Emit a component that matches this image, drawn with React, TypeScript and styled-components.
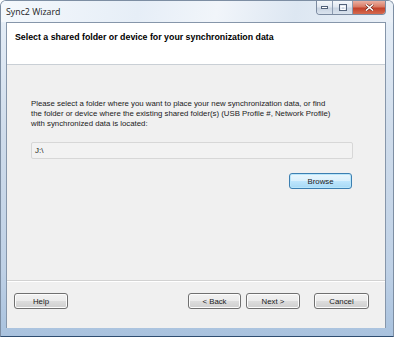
import React from 'react';
import styled, { createGlobalStyle, css } from 'styled-components';

const Global = createGlobalStyle`
  html, body { margin: 0; padding: 0; background: #ffffff; }
  body { font-family: "Liberation Sans", Arial, sans-serif; }
  #root { width: 394px; height: 337px; }
`;

const Window = styled.div`
  width: 394px;
  height: 337px;
  box-sizing: border-box;
  display: flex;
  flex-direction: column;
  border: 1px solid #7d8ea3;
  border-bottom-color: #2f4d70;
  border-radius: 6px 6px 0 0;
  overflow: hidden;
  background: linear-gradient(180deg, #f3f7fb 0%, #e3ecf6 8%, #cfdceb 40%, #bfd1e6 80%, #a9c2de 100%);
`;

const TitleBar = styled.div`
  height: 21px;
  flex: none;
  display: flex;
  align-items: flex-start;
  justify-content: space-between;
  padding: 0 7px 0 5px;
  background: linear-gradient(100deg, #f4f8fc 0%, #e6eef7 35%, #f1f5fa 55%, #dde7f2 75%, #eaf0f7 100%);
`;

const Title = styled.div`
  font-family: "Open Sans", "Liberation Sans", sans-serif;
  font-size: 8.8px;
  color: #1b1b1b;
  line-height: 1;
  padding-top: 7px;
`;

const Caption = styled.div`
  display: flex;
  height: 13px;
  border: 1px solid #7b8aa0;
  border-top: none;
  border-radius: 0 0 4px 4px;
  overflow: hidden;
`;

const CapBtn = styled.div<{ $w: number; $close?: boolean }>`
  width: ${p => p.$w}px;
  height: 100%;
  display: flex;
  align-items: center;
  justify-content: center;
  box-sizing: border-box;
  ${p => p.$close
    ? css`
      background: linear-gradient(180deg, #eab0a2 0%, #d97a64 45%, #c2412a 55%, #d56a4f 100%);
    `
    : css`
      background: linear-gradient(180deg, #f4f7fb 0%, #e1e8f1 45%, #c9d4e2 55%, #dae3ee 100%);
      border-right: 1px solid #8c9bb0;
    `}
`;

const ClientWrap = styled.div`
  flex: 1;
  display: flex;
  padding: 0 7px 0 5px;
`;

const Client = styled.div`
  flex: 1;
  display: flex;
  flex-direction: column;
  border: 1px solid #8696aa;
  border-bottom: none;
  background: #f0f0f0;
`;

const Header = styled.div`
  height: 41px;
  flex: none;
  background: #ffffff;
  border-bottom: 1px solid #c9cfd5;
  box-sizing: content-box;
  display: flex;
  align-items: flex-start;
  padding-left: 8px;
`;

const Heading = styled.div`
  font-weight: bold;
  font-size: 8.8px;
  color: #000;
  padding-top: 9px;
  line-height: 10px;
`;

const Body = styled.div`
  flex: 1;
  display: flex;
  flex-direction: column;
  padding: 34px 32px 0 24px;
`;

const Para = styled.p`
  margin: 0;
  font-size: 7.8px;
  line-height: 10px;
  color: #1a1a1a;
`;

const PathBox = styled.div`
  margin-top: 13px;
  height: 17px;
  box-sizing: border-box;
  border: 1px solid #d7d7d7;
  border-radius: 2px;
  background: #f2f2f2;
  font-size: 8px;
  color: #1a1a1a;
  display: flex;
  align-items: center;
  padding-left: 3px;
`;

const BrowseRow = styled.div`
  margin-top: 14px;
  display: flex;
  justify-content: flex-end;
  padding-right: 1px;
`;

const Button = styled.button<{ $w: number; $default?: boolean }>`
  width: ${p => p.$w}px;
  height: 16px;
  padding: 0;
  margin: 0;
  box-sizing: border-box;
  font-family: "Liberation Sans", Arial, sans-serif;
  font-size: 7.8px;
  color: #1a1a1a;
  border-radius: 3px;
  border: 1px solid #707070;
  box-shadow: inset 0 0 0 1px #fcfcfc;
  background: linear-gradient(180deg, #f2f2f2 0%, #ebebeb 50%, #dddddd 51%, #cfcfcf 100%);
  ${p => p.$default && css`
    border-color: #3c7fb1;
    box-shadow: inset 0 0 0 1px #b9e6fb;
    background: linear-gradient(180deg, #eaf6fd 0%, #d9f0fc 50%, #bee6fd 51%, #a7d9f5 100%);
  `}
`;

const Footer = styled.div`
  height: 35px;
  flex: none;
  border-top: 1px solid #d2d2d2;
  box-shadow: inset 0 1px 0 #ffffff;
  display: flex;
  align-items: flex-start;
  padding: 12px 16px 0 7px;
  gap: 5px;
`;

const Spacer = styled.div`
  flex: 1;
`;

const Gap = styled.div<{ $w: number }>`
  width: ${p => p.$w}px;
`;

const BottomFrame = styled.div`
  height: 8px;
  flex: none;
`;

export default function App() {
  return (
    <>
      <Global />
      <Window>
        <TitleBar>
          <Title>Sync2 Wizard</Title>
          <Caption>
            <CapBtn $w={16}>
              <svg width="7" height="3" viewBox="0 0 7 3"><rect x="0.5" y="0.5" width="6" height="2" fill="#fff" stroke="#52627a" strokeWidth="1" /></svg>
            </CapBtn>
            <CapBtn $w={20}>
              <svg width="8" height="7" viewBox="0 0 8 7"><rect x="0.5" y="0.5" width="7" height="6" fill="none" stroke="#52627a" strokeWidth="1" /><rect x="2" y="2.5" width="4" height="3" fill="none" stroke="#ffffff" strokeWidth="1" /></svg>
            </CapBtn>
            <CapBtn $w={32} $close>
              <svg width="9" height="7" viewBox="0 0 9 7"><path d="M1 0.5 L8 6.5 M8 0.5 L1 6.5" stroke="#5a1a10" strokeWidth="2.6" /><path d="M1 0.5 L8 6.5 M8 0.5 L1 6.5" stroke="#ffffff" strokeWidth="1.6" /></svg>
            </CapBtn>
          </Caption>
        </TitleBar>
        <ClientWrap>
          <Client>
            <Header>
              <Heading>Select a shared folder or device for your synchronization data</Heading>
            </Header>
            <Body>
              <Para>
                Please select a folder where you want to place your new synchronization data, or find<br />
                the folder or device where the existing shared folder(s) (USB Profile #, Network Profile)<br />
                with synchronized data is located:
              </Para>
              <PathBox>J:\</PathBox>
              <BrowseRow>
                <Button $w={63} $default>Browse</Button>
              </BrowseRow>
            </Body>
            <Footer>
              <Button $w={54}>Help</Button>
              <Spacer />
              <Button $w={53}>&lt; Back</Button>
              <Button $w={54}>Next &gt;</Button>
              <Gap $w={4} />
              <Button $w={55}>Cancel</Button>
            </Footer>
          </Client>
        </ClientWrap>
        <BottomFrame />
      </Window>
    </>
  );
}
